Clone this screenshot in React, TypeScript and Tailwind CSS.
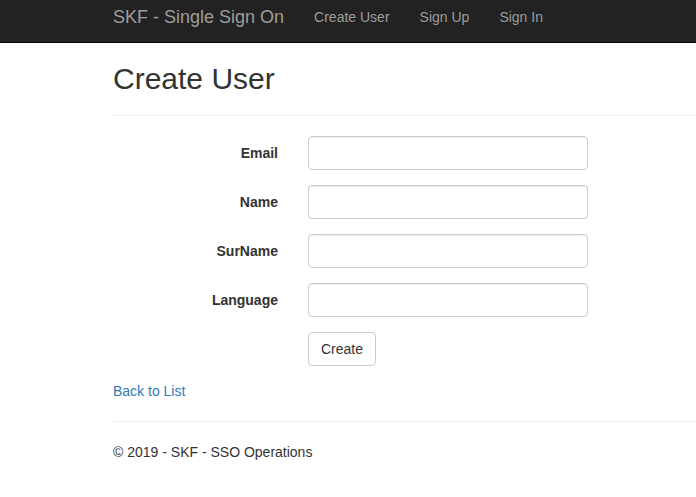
import React from 'react';

const fields = ['Email', 'Name', 'SurName', 'Language'];

export default function App() {
  return (
    <div
      className="min-h-screen w-full overflow-hidden bg-white text-[14px] leading-[20px] text-[#333]"
      style={{ fontFamily: '"Liberation Sans", Arial, sans-serif' }}
    >
      {/* Navbar */}
      <nav className="h-[43px] border-b border-[#080808] bg-[#222]">
        <div className="ml-[98px] flex w-[1170px] px-[15px]">
          <a className="pr-[15px] pt-[7px] text-[18px] leading-[20px] text-[#9d9d9d]">
            SKF - Single Sign On
          </a>
          <ul className="flex">
            {['Create User', 'Sign Up', 'Sign In'].map(l => (
              <li key={l}>
                <a className="block px-[15px] pt-[7px] leading-[20px] text-[#9d9d9d]">{l}</a>
              </li>
            ))}
          </ul>
        </div>
      </nav>

      <div className="ml-[98px] w-[1170px] px-[15px]">
        <h2 className="mt-[19px] text-[30px] font-normal leading-[33px] text-[#333]">Create User</h2>
        <hr className="mt-[20px] mb-[20px] border-0 border-t border-[#eee]" />

        <form className="flex flex-col">
          {fields.map(f => (
            <div key={f} className="mb-[15px] flex">
              <label className="w-[165px] pt-[7px] text-right font-bold">{f}</label>
              <div className="pl-[30px]">
                <input
                  type="text"
                  className="h-[34px] w-[280px] rounded-[4px] border border-[#ccc] px-[12px] py-[6px] shadow-[inset_0_1px_1px_rgba(0,0,0,0.075)] outline-none"
                />
              </div>
            </div>
          ))}
          <div className="mb-[15px] flex">
            <div className="w-[165px]" />
            <div className="pl-[30px]">
              <button
                type="button"
                className="h-[34px] rounded-[4px] border border-[#ccc] bg-white px-[12px] py-[6px] leading-[20px] text-[#333]"
              >
                Create
              </button>
            </div>
          </div>
        </form>

        <div>
          <a className="text-[#337ab7]">Back to List</a>
        </div>

        <hr className="mt-[20px] mb-[20px] border-0 border-t border-[#eee]" />
        <footer>
          <p>© 2019 - SKF - SSO Operations</p>
        </footer>
      </div>
    </div>
  );
}
